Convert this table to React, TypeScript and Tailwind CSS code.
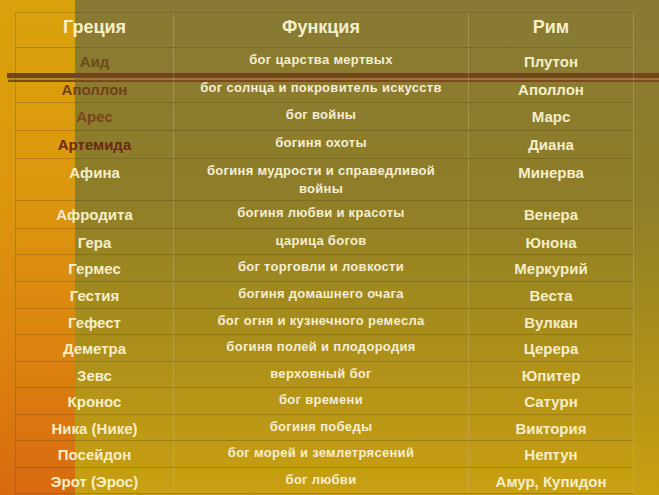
type Row = {
  greek: string;
  func: string[];
  rome: string;
  h: string;
  color?: string;
};

const rows: Row[] = [
  { greek: "Аид", func: ["бог царства мертвых"], rome: "Плутон", h: "h-[28px]", color: "text-[#6a4c1a]" },
  { greek: "Аполлон", func: ["бог солнца и покровитель искусств"], rome: "Аполлон", h: "h-[27px]", color: "text-[#74401a]" },
  { greek: "Арес", func: ["бог войны"], rome: "Марс", h: "h-[28px]", color: "text-[#7a4420]" },
  { greek: "Артемида", func: ["богиня охоты"], rome: "Диана", h: "h-[28px]", color: "text-[#6a2a14]" },
  { greek: "Афина", func: ["богиня мудрости и справедливой", "войны"], rome: "Минерва", h: "h-[42px]" },
  { greek: "Афродита", func: ["богиня любви и красоты"], rome: "Венера", h: "h-[28px]" },
  { greek: "Гера", func: ["царица богов"], rome: "Юнона", h: "h-[26px]" },
  { greek: "Гермес", func: ["бог торговли и ловкости"], rome: "Меркурий", h: "h-[27px]" },
  { greek: "Гестия", func: ["богиня домашнего очага"], rome: "Веста", h: "h-[27px]" },
  { greek: "Гефест", func: ["бог огня и кузнечного ремесла"], rome: "Вулкан", h: "h-[26px]" },
  { greek: "Деметра", func: ["богиня полей и плодородия"], rome: "Церера", h: "h-[27px]" },
  { greek: "Зевс", func: ["верховный бог"], rome: "Юпитер", h: "h-[26px]" },
  { greek: "Кронос", func: ["бог времени"], rome: "Сатурн", h: "h-[27px]" },
  { greek: "Ника (Нике)", func: ["богиня победы"], rome: "Виктория", h: "h-[26px]" },
  { greek: "Посейдон", func: ["бог морей и землетрясений"], rome: "Нептун", h: "h-[27px]" },
  { greek: "Эрот (Эрос)", func: ["бог любви"], rome: "Амур, Купидон", h: "h-[26px]" },
];

export default function App() {
  return (
    <div
      className="relative w-[659px] h-[495px] overflow-hidden flex bg-[linear-gradient(180deg,#887a34_0%,#8e7e28_40%,#a68c1c_65%,#caa011_100%)]"
      style={{ fontFamily: '"Liberation Sans", Arial, sans-serif' }}
    >
      {/* left orange strip of the slide */}
      <div className="absolute left-0 top-0 w-[75px] h-full bg-[linear-gradient(180deg,#d9a20c_0%,#dc980e_35%,#dc880f_65%,#d86a0f_100%)]" />

      {/* decorative brown double line */}
      <div className="absolute left-[7px] right-0 top-[73px] h-[5px] bg-[#74461a]" />
      <div className="absolute left-[8px] right-0 top-[78px] h-[2px] bg-[#a27a3a]/60" />
      <div className="absolute left-[8px] right-0 top-[80px] h-[2px] bg-[#7a4a1c]" />

      {/* table */}
      <div className="relative mt-[12px] ml-[15px] w-[618px] border-t border-l border-[rgba(80,70,30,0.25)] font-bold">
        <div className="grid grid-cols-[158px_295px_165px] h-[35px] text-[18px] text-[#f7efc6] border-b border-[rgba(80,70,30,0.3)]">
          <div className="flex items-center justify-center pb-[6px] border-r border-[rgba(200,200,170,0.3)]">Греция</div>
          <div className="flex items-center justify-center pb-[6px] border-r border-[rgba(200,200,170,0.3)]">Функция</div>
          <div className="flex items-center justify-center pb-[6px] border-r border-[rgba(200,200,170,0.3)]">Рим</div>
        </div>
        {rows.map((r) => (
          <div
            key={r.greek}
            className={`grid grid-cols-[158px_295px_165px] ${r.h} border-b border-[rgba(80,70,30,0.3)]`}
          >
            <div
              className={`pt-[5px] text-center text-[15px] leading-[18px] border-r border-[rgba(200,200,170,0.3)] ${r.color ?? "text-[#f5eec8]"}`}
            >
              {r.greek}
            </div>
            <div className="pt-[3px] text-center text-[13px] tracking-[0.3px] leading-[18px] text-[#f4eed4] border-r border-[rgba(200,200,170,0.3)]">
              {r.func.map((f) => (
                <div key={f}>{f}</div>
              ))}
            </div>
            <div className="pt-[5px] text-center text-[15px] leading-[18px] text-[#f5eec8] border-r border-[rgba(200,200,170,0.3)]">
              {r.rome}
            </div>
          </div>
        ))}
      </div>
    </div>
  );
}
